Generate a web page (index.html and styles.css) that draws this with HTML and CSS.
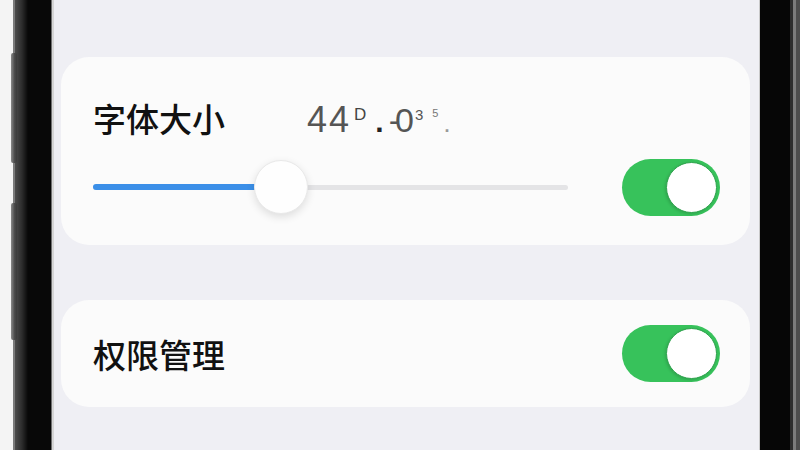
FILE: index.html
```html
<!DOCTYPE html>
<html lang="zh-CN">
  <head>
    <meta charset="UTF-8" />
    <meta name="viewport" content="width=device-width, initial-scale=1.0" />
    <title>设置</title>
    <link rel="stylesheet" href="styles.css">
  </head>
  <body>
    <div class="phone">
      <div class="bezel bezel-left"></div>

      <main class="screen">
        <!-- font size card -->
        <section class="card card-font">
          <div class="font-row">
            <span class="label">字体大小</span>
            <span class="size-value"><span class="big">44</span><span class="sup-d">D</span><span class="dot">.</span><span class="big zero">-0</span><span class="sup-3">3</span><span class="sup-5">5</span><span class="dot-small">.</span></span>
          </div>
          <div class="slider-row">
            <div class="slider">
              <div class="track"></div>
              <div class="fill"></div>
              <div class="thumb"></div>
            </div>
            <div class="toggle on"><span class="knob"></span></div>
          </div>
        </section>

        <!-- permissions card -->
        <section class="card card-perm">
          <span class="label">权限管理</span>
          <div class="toggle on"><span class="knob"></span></div>
        </section>
      </main>

      <div class="bezel bezel-right"></div>
    </div>
  </body>
</html>
```

FILE: styles.css
```css
* {
  box-sizing: border-box;
  margin: 0;
  padding: 0;
}

html,
body {
  width: 800px;
  height: 450px;
  overflow: hidden;
  background: #f3f3f3;
  font-family: "Noto Sans CJK SC", "Noto Sans", sans-serif;
}

/* Phone layout */
.phone {
  display: flex;
  width: 800px;
  height: 450px;
}

.bezel {
  position: relative;
  flex: none;
  height: 100%;
}

.bezel-left {
  width: 54px;
  background: linear-gradient(
    to right,
    #f4f4f4 0px,
    #f4f4f4 13px,
    #7a7a7a 13px,
    #7a7a7a 15px,
    #4c4c4c 15px,
    #3a3a3a 19px,
    #2c2c2c 22px,
    #080808 28px,
    #080808 51px,
    #6f6f6f 51px,
    #6f6f6f 52px,
    #d6d6d6 52px,
    #d6d6d6 54px
  );
}

/* side buttons */
.bezel-left::before,
.bezel-left::after {
  content: "";
  position: absolute;
  left: 11px;
  width: 6px;
  border-radius: 2px;
  background: linear-gradient(to right, #8a8a8a, #4a4a4a 60%, #3a3a3a);
}

.bezel-left::before {
  top: 53px;
  height: 110px;
}

.bezel-left::after {
  top: 203px;
  height: 137px;
}

.bezel-right {
  width: 41px;
  background: linear-gradient(
    to right,
    #c9c9c9 0px,
    #c9c9c9 1px,
    #060606 1px,
    #060606 31px,
    #2e2e2e 31px,
    #2e2e2e 34px,
    #7c7c7c 34px,
    #7c7c7c 37px,
    #4d4d4d 37px,
    #4d4d4d 41px
  );
}

.screen {
  flex: 1;
  display: flex;
  flex-direction: column;
  gap: 55px;
  padding: 57px 9px 0 7px;
  background: #efeff4;
}

/* Cards */
.card {
  background: #fbfbfb;
  border-radius: 28px;
  padding: 0 30px 0 32px;
}

.card-font {
  height: 188px;
  padding-top: 36px;
  padding-bottom: 30px;
}

.card-perm {
  height: 107px;
  display: flex;
  align-items: center;
  justify-content: space-between;
}

.label {
  font-size: 33px;
  font-weight: 500;
  color: #111;
  line-height: 40px;
}

.font-row {
  display: flex;
  align-items: baseline;
  height: 40px;
  line-height: 40px;
}

.font-row .label {
  width: 214px;
  flex: none;
}

/* garbled size value */
.size-value {
  font-family: "Liberation Sans", Arial, sans-serif;
  color: #555;
  white-space: nowrap;
}

.size-value .big {
  font-size: 36px;
  letter-spacing: 2px;
}

.size-value .zero {
  font-size: 34px;
  letter-spacing: -5px;
  margin-left: 5px;
}

.sup-d {
  font-size: 17px;
  vertical-align: 12px;
  margin-left: 3px;
  color: #444;
}

.dot {
  font-size: 30px;
  font-weight: bold;
  color: #222;
  margin-left: 9px;
}

.sup-3 {
  font-size: 15px;
  vertical-align: 12px;
  margin-left: 6px;
}

.sup-5 {
  font-size: 11px;
  vertical-align: 15px;
  margin-left: 9px;
  color: #777;
}

.dot-small {
  font-size: 18px;
  font-weight: bold;
  color: #999;
  margin-left: 6px;
}

/* Slider */
.slider-row {
  display: flex;
  align-items: center;
  justify-content: space-between;
  margin-top: 26px;
  height: 56px;
}

.slider {
  position: relative;
  width: 475px;
  height: 56px;
}

.track {
  position: absolute;
  left: 0;
  right: 0;
  top: 26px;
  height: 5px;
  border-radius: 3px;
  background: #e4e4e6;
}

.fill {
  position: absolute;
  left: 0;
  top: 25px;
  width: 180px;
  height: 6px;
  border-radius: 3px;
  background: #3b8fe8;
}

.thumb {
  position: absolute;
  left: 161px;
  top: 1px;
  width: 54px;
  height: 54px;
  border-radius: 50%;
  background: #fefefe;
  border: 1px solid #e9e9e9;
  box-shadow: 0 3px 8px rgba(0, 0, 0, 0.12);
}

/* Toggle */
.toggle {
  display: flex;
  align-items: center;
  justify-content: flex-end;
  flex: none;
  width: 98px;
  height: 57px;
  padding: 3px;
  border-radius: 29px;
  background: #ccc;
}

.toggle.on {
  background: #37c25b;
}

.knob {
  width: 51px;
  height: 51px;
  border-radius: 50%;
  background: #fff;
  border: 1.5px solid #2ea34d;
  box-shadow: -1px 1px 3px rgba(0, 0, 0, 0.15);
}
```
